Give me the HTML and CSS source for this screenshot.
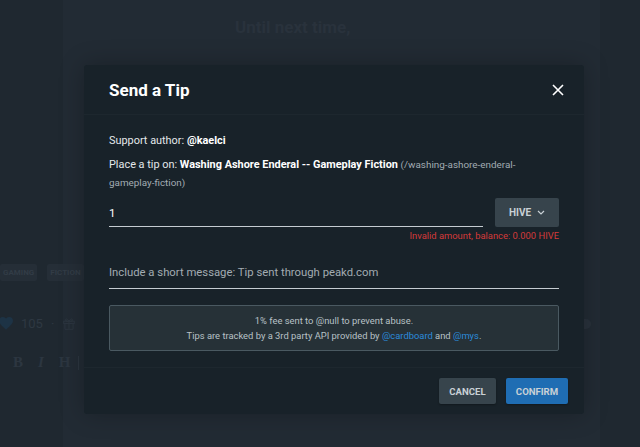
FILE: index.html
```html
<!DOCTYPE html>
<html>
<head>
<meta charset="utf-8">
<link rel="stylesheet" href="styles.css">
</head>
<body>
<div class="page">
  <div class="column">
    <h2 class="bg-title">Until next time,</h2>
    <div class="bg-tags">
      <span class="bg-tag">GAMING</span>
      <span class="bg-tag">FICTION</span>
    </div>
    <div class="bg-stats">
      <svg class="bg-heart" width="14" height="13" viewBox="0 0 24 22"><path d="M12 21.5 10.3 20C4.2 14.5 0 10.7 0 6.2 0 2.7 2.7 0 6.2 0c2 0 3.9.9 5.8 2.4C13.9.9 15.8 0 17.8 0 21.3 0 24 2.7 24 6.2c0 4.5-4.2 8.3-10.3 13.8z" fill="#1d3345"/></svg>
      <span class="bg-count">105</span>
      <span class="bg-dot">·</span>
      <svg width="14" height="15" viewBox="0 0 24 24" fill="none" stroke="#2c3640" stroke-width="1.6"><rect x="3" y="8" width="18" height="4"/><path d="M5 12v10h14V12M12 8v14M12 8C10 4 6 3 6 6s6 2 6 2zM12 8c2-4 6-5 6-2s-6 2-6 2z"/></svg>
    </div>
    <div class="bg-editor">
      <span class="bg-b">B</span>
      <span class="bg-i">I</span>
      <span class="bg-h">H</span>
      <span class="bg-sep"></span>
    </div>
  </div>
  <div class="bg-right-dot"></div>
</div>

<div class="modal">
  <div class="modal-header">
    <h1 class="modal-title">Send a Tip</h1>
    <svg class="close" width="12" height="12" viewBox="0 0 12 12"><path d="M1 1l10 10M11 1 1 11" stroke="#ffffff" stroke-width="1.6"/></svg>
  </div>
  <div class="modal-body">
    <p class="line">Support author: <b>@kaelci</b></p>
    <p class="line">Place a tip on: <b>Washing Ashore Enderal -- Gameplay Fiction</b> <span class="slug">(/washing-ashore-enderal-gameplay-fiction)</span></p>
    <div class="amount-row">
      <div class="amount-input">1</div>
      <div class="currency">HIVE <svg width="8" height="5" viewBox="0 0 8 5"><path d="M1 1l3 3 3-3" stroke="#c9d1d6" stroke-width="1.2" fill="none"/></svg></div>
    </div>
    <div class="error">Invalid amount, balance: 0.000 HIVE</div>
    <div class="message-input">Include a short message: Tip sent through peakd.com</div>
    <div class="info">
      <div>1% fee sent to @null to prevent abuse.</div>
      <div>Tips are tracked by a 3rd party API provided by <span class="link">@cardboard</span> and <span class="link">@mys</span>.</div>
    </div>
  </div>
  <div class="modal-footer">
    <button class="btn btn-cancel">CANCEL</button>
    <button class="btn btn-confirm">CONFIRM</button>
  </div>
</div>
</body>
</html>
```

FILE: styles.css
```css
* { box-sizing: border-box; }
html, body {
  margin: 0;
  padding: 0;
  width: 640px;
  height: 447px;
  overflow: hidden;
  background: #1f2830;
  font-family: Roboto, "Liberation Sans", sans-serif;
}
.page {
  position: relative;
  width: 640px;
  height: 447px;
}
.column {
  margin-left: 63px;
  width: 537px;
  height: 447px;
  background: #222b34;
  position: relative;
}
.bg-title {
  margin: 0;
  padding-top: 15px;
  padding-left: 172px;
  font-size: 17px;
  font-weight: 700;
  color: #29323c;
  line-height: 24px;
}
.bg-tags {
  position: absolute;
  left: -63px;
  top: 264px;
  display: flex;
  gap: 10px;
}
.bg-tag {
  font-size: 8px;
  font-weight: 700;
  color: #323c46;
  background: #252e37;
  padding: 4px 3px;
  border-radius: 2px;
}
.bg-stats {
  position: absolute;
  left: -64px;
  top: 316px;
  display: flex;
  align-items: center;
  gap: 8px;
  font-size: 13px;
  color: #2e3842;
}
.bg-editor {
  position: absolute;
  left: -50px;
  top: 354px;
  display: flex;
  align-items: center;
  font-family: "Liberation Serif", serif;
  font-weight: 700;
  font-size: 15px;
  color: #2c3640;
}
.bg-i { font-style: italic; margin-left: 15px; }
.bg-h { margin-left: 15px; }
.bg-sep { width: 1px; height: 14px; background: #2c3640; margin-left: 7px; }
.bg-right-dot {
  position: absolute;
  left: 584px;
  top: 319px;
  width: 7px;
  height: 10px;
  border-radius: 0 5px 5px 0;
  background: #29323c;
}

.modal {
  position: absolute;
  left: 84px;
  top: 65px;
  width: 500px;
  height: 349px;
  background: #182229;
  border-radius: 3px;
  box-shadow: 0 0 24px rgba(0,0,0,0.25);
  display: flex;
  flex-direction: column;
  color: #e3e8eb;
}
.modal-header {
  height: 50px;
  padding: 0 20px 0 25px;
  display: flex;
  align-items: center;
  justify-content: space-between;
  border-bottom: 1px solid #1d272e;
}
.modal-title {
  margin: 0;
  font-size: 17px;
  font-weight: 700;
  color: #ffffff;
}
.modal-body {
  padding: 17px 25px 0 25px;
  flex: 1;
  border-bottom: 1px solid #1d272e;
}
.line {
  margin: 0 0 6px 0;
  font-size: 10.9px;
  line-height: 18px;
  color: #e3e8eb;
}
.line b { color: #ffffff; font-weight: 700; }
.slug { color: #a2acb3; font-size: 9.9px; }
.amount-row {
  display: flex;
  gap: 12px;
  height: 29px;
  margin-top: 6px;
}
.amount-input {
  flex: 1;
  border-bottom: 1px solid #c5ccd1;
  font-size: 11.5px;
  line-height: 28px;
  padding-top: 1px;
  color: #ffffff;
}
.currency {
  width: 64px;
  background: #37444c;
  border-radius: 2px;
  display: flex;
  align-items: center;
  justify-content: center;
  gap: 6px;
  font-size: 10px;
  font-weight: 700;
  color: #c9d1d6;
}
.error {
  text-align: right;
  font-size: 9.4px;
  line-height: 16px;
  margin-top: 1px;
  color: #d53a3a;
}
.message-input {
  margin-top: 16px;
  height: 29px;
  border-bottom: 1px solid #c5ccd1;
  font-size: 11.3px;
  line-height: 26px;
  color: #a3acb2;
}
.info {
  margin-top: 16px;
  height: 46px;
  border: 1px solid #4a5961;
  border-radius: 2px;
  background: #263137;
  display: flex;
  flex-direction: column;
  justify-content: center;
  align-items: center;
  font-size: 9.4px;
  line-height: 15px;
  color: #b8c1c6;
}
.link { color: #2b8bdb; }
.modal-footer {
  height: 46px;
  padding: 0 16px;
  display: flex;
  align-items: center;
  justify-content: flex-end;
  gap: 10px;
}
.btn {
  height: 26px;
  border: none;
  border-radius: 2px;
  font-family: Roboto, "Liberation Sans", sans-serif;
  font-size: 9.6px;
  font-weight: 700;
  color: #c9d1d6;
  padding: 0;
  box-shadow: 0 1px 2px rgba(0,0,0,0.3);
}
.btn-cancel { background: #37444c; width: 57px; }
.btn-confirm { background: #1f6db3; width: 62px; }
```
